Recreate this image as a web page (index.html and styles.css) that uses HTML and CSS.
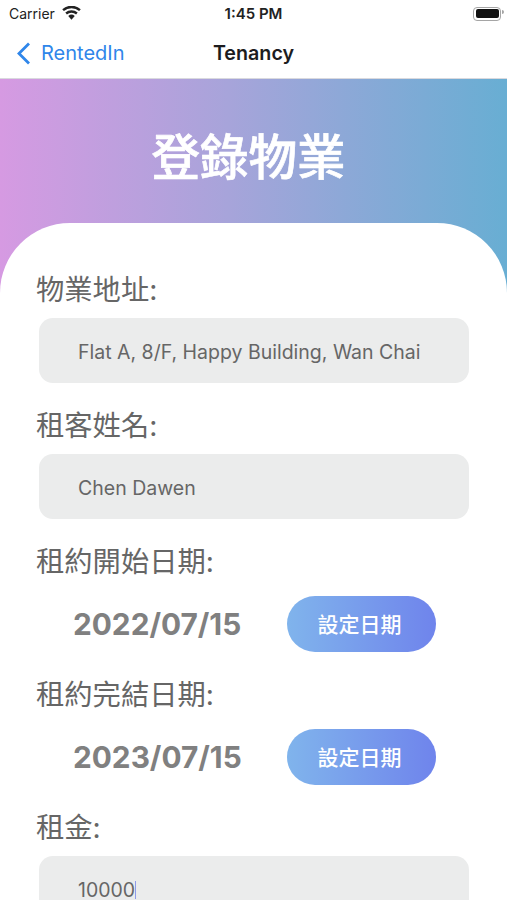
FILE: index.html
```html
<!DOCTYPE html>
<html lang="zh-Hant">
<head>
  <meta charset="UTF-8">
  <meta name="viewport" content="width=device-width, initial-scale=1.0">
  <title>Tenancy</title>
  <link rel="stylesheet" href="styles.css">
</head>
<body>
<div class="statusbar">
  <div class="carrier">
    <span>Carrier</span>
    <svg class="wifi" viewBox="0 0 18 13" width="19" height="14">
      <path d="M9 13 L5.9 9.3 A4.8 4.8 0 0 1 12.1 9.3 Z" fill="#222"/>
      <path d="M3.9 7 A7.8 7.8 0 0 1 14.1 7" fill="none" stroke="#222" stroke-width="2.3"/>
      <path d="M1 3.8 A12 12 0 0 1 17 3.8" fill="none" stroke="#222" stroke-width="2.3"/>
    </svg>
  </div>
  <div class="time">1:45 PM</div>
  <div class="battery"><span class="battery-level"></span></div>
</div>
<nav class="navbar">
  <a class="back">
    <svg viewBox="0 0 15 23" width="15" height="23">
      <path d="M13 1.5 L3 11.5 L13 21.5" fill="none" stroke="#2f86ea" stroke-width="2.8"/>
    </svg>
    <span>RentedIn</span>
  </a>
  <div class="nav-title">Tenancy</div>
</nav>
<div class="hero">
  <h1>登錄物業</h1>
  <form class="card">
    <label class="field-label first">物業地址:</label>
    <div class="input">Flat A, 8/F, Happy Building, Wan Chai</div>
    <label class="field-label">租客姓名:</label>
    <div class="input">Chen Dawen</div>
    <label class="field-label">租約開始日期:</label>
    <div class="date-row">
      <span class="date">2022/07/15</span>
      <button type="button" class="date-btn">設定日期</button>
    </div>
    <label class="field-label">租約完結日期:</label>
    <div class="date-row">
      <span class="date">2023/07/15</span>
      <button type="button" class="date-btn">設定日期</button>
    </div>
    <label class="field-label">租金:</label>
    <div class="input">10000<span class="caret"></span></div>
  </form>
</div>
</body>
</html>
```

FILE: styles.css
```css
html, body {
  height: 900px;
  overflow: hidden;
}
body {
  margin: 0;
  background: white;
  font-family: Inter, "Noto Sans CJK TC", sans-serif;
}
.statusbar {
  height: 27px;
  display: flex;
  align-items: center;
  justify-content: space-between;
  padding: 0 6px 0 9px;
  color: #222;
  position: relative;
}
.carrier {
  display: flex;
  align-items: center;
  gap: 7px;
  font-size: 14px;
}
.wifi {
  margin-top: -1px;
}
.time {
  position: absolute;
  left: 0;
  right: 0;
  text-align: center;
  font-size: 15px;
  font-weight: 600;
}
.battery {
  width: 28px;
  height: 14px;
  box-sizing: border-box;
  border: 1.5px solid #a5a5a5;
  border-radius: 4px;
  padding: 1.5px;
  display: flex;
  position: relative;
}
.battery::after {
  content: "";
  position: absolute;
  right: -4px;
  top: 2.5px;
  width: 2px;
  height: 4px;
  background: #a5a5a5;
  border-radius: 0 2px 2px 0;
}
.battery-level {
  flex: 1;
  background: #111;
  border-radius: 2px;
}
.navbar {
  height: 52px;
  display: flex;
  align-items: center;
  justify-content: center;
  position: relative;
  border-bottom: 1px solid #d9d9de;
  box-sizing: border-box;
}
.back {
  position: absolute;
  left: 16px;
  top: 14px;
  display: flex;
  align-items: center;
  gap: 10px;
  color: #2f86ea;
  font-size: 20px;
}
.nav-title {
  font-size: 19.7px;
  font-weight: 600;
  color: #1c1c1e;
}
.hero {
  background: linear-gradient(90deg, #d69ae2 0%, #a7a4da 45%, #68aed3 100%);
  height: 821px;
}
h1 {
  margin: 0;
  height: 144px;
  box-sizing: border-box;
  padding: 44px 10px 0 0;
  text-align: center;
  color: white;
  font-size: 48.5px;
  line-height: 70px;
  font-weight: 500;
  -webkit-text-stroke: 0.7px white;
}
.card {
  background: white;
  border-radius: 70px 70px 0 0;
  height: 677px;
  box-sizing: border-box;
  padding: 47px 38px 0 36px;
}
.field-label {
  display: block;
  color: #666;
  font-size: 28.3px;
  line-height: 40px;
  margin-top: 23px;
}
.field-label.first {
  margin-top: 0;
}
.input {
  margin: 8px 0 0 3px;
  height: 65px;
  box-sizing: border-box;
  background: #ebecec;
  border-radius: 14px;
  padding: 3px 0 0 39px;
  display: flex;
  align-items: center;
  font-size: 19.5px;
  line-height: 18px;
  color: #666;
}
.caret {
  width: 1px;
  height: 18px;
  background: #8f9be8;
}
.date-row {
  height: 56px;
  margin-top: 14px;
  display: flex;
  align-items: center;
  padding-left: 37px;
}
.date {
  width: 214px;
  font-size: 29.8px;
  font-weight: 700;
  color: #808080;
}
.date-btn {
  width: 149px;
  height: 56px;
  border: none;
  border-radius: 28px;
  padding: 0 4px 2px 0;
  background: linear-gradient(90deg, #80b4ec, #6f84ec);
  color: white;
  font-family: inherit;
  font-size: 21px;
  font-weight: 500;
}
```
